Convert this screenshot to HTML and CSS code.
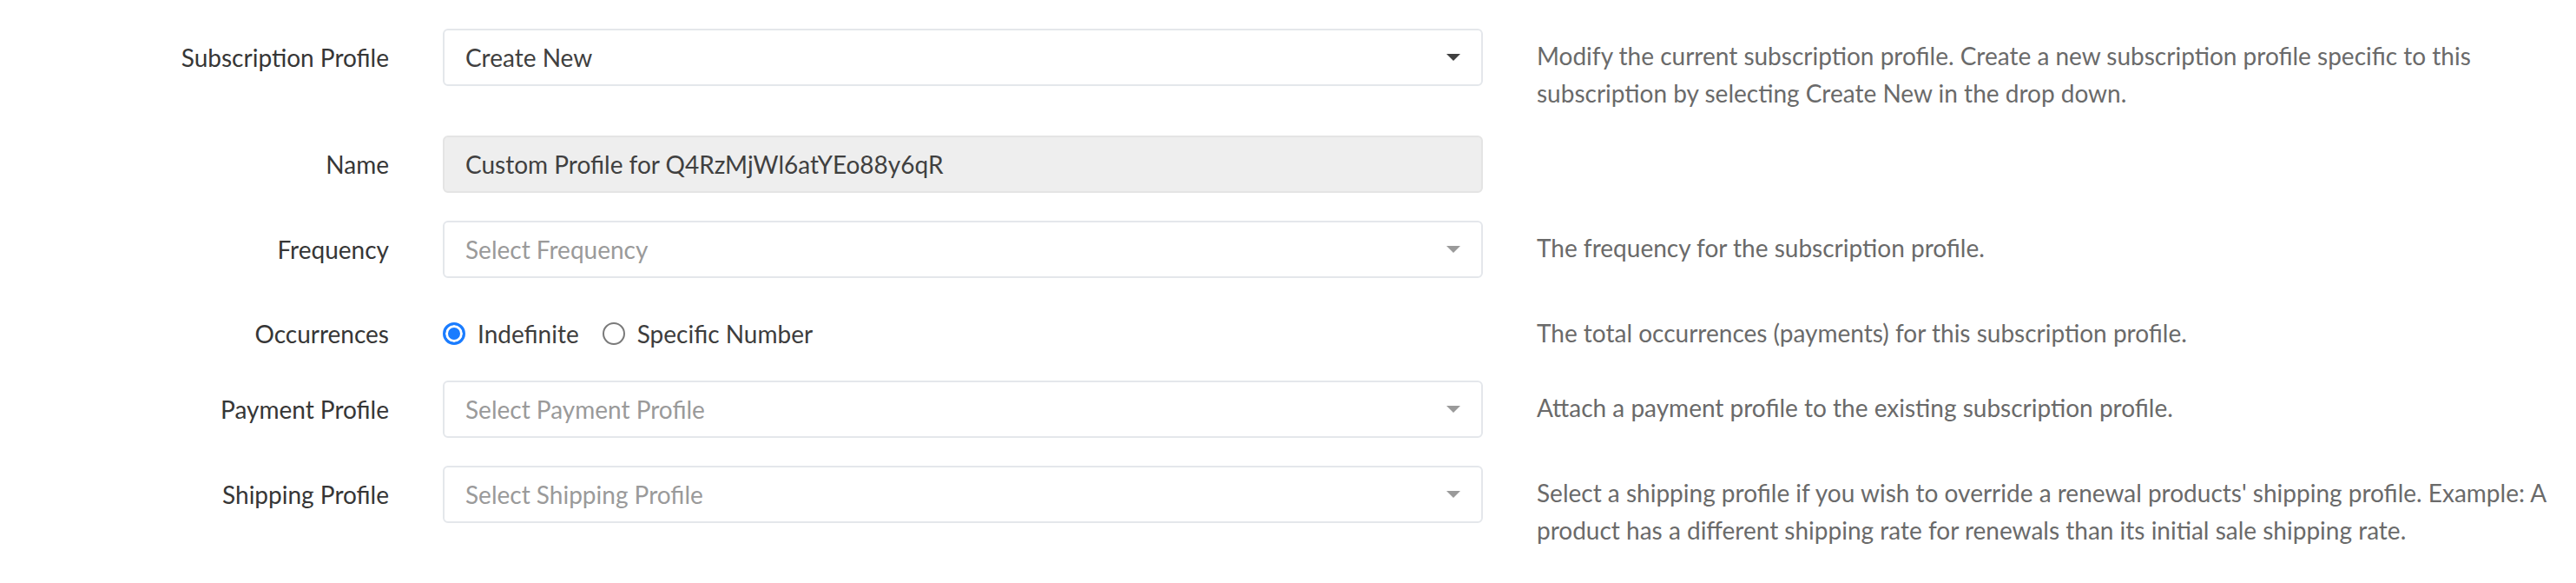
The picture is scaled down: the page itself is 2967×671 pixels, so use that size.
FILE: index.html
```html
<!DOCTYPE html>
<html lang="en">
<head>
<meta charset="utf-8">
<title>Subscription Profile</title>
<link rel="stylesheet" href="styles.css">
</head>
<body>
<form class="form">
  <div class="row">
    <label class="label">Subscription Profile</label>
    <div class="control">
      <div class="select"><span class="value">Create New</span><span class="caret"></span></div>
    </div>
    <p class="help">Modify the current subscription profile. Create a new subscription profile specific to this subscription by selecting Create New in the drop down.</p>
  </div>
  <div class="row">
    <label class="label">Name</label>
    <div class="control">
      <div class="input disabled">Custom Profile for Q4RzMjWl6atYEo88y6qR</div>
    </div>
    <p class="help"></p>
  </div>
  <div class="row">
    <label class="label">Frequency</label>
    <div class="control">
      <div class="select"><span class="placeholder">Select Frequency</span><span class="caret light"></span></div>
    </div>
    <p class="help">The frequency for the subscription profile.</p>
  </div>
  <div class="row row-radio">
    <label class="label">Occurrences</label>
    <div class="control radios">
      <span class="radio-item"><span class="radio checked"></span><span>Indefinite</span></span>
      <span class="radio-item"><span class="radio"></span><span>Specific Number</span></span>
    </div>
    <p class="help">The total occurrences (payments) for this subscription profile.</p>
  </div>
  <div class="row">
    <label class="label">Payment Profile</label>
    <div class="control">
      <div class="select"><span class="placeholder">Select Payment Profile</span><span class="caret light"></span></div>
    </div>
    <p class="help">Attach a payment profile to the existing subscription profile.</p>
  </div>
  <div class="row">
    <label class="label">Shipping Profile</label>
    <div class="control">
      <div class="select"><span class="placeholder">Select Shipping Profile</span><span class="caret light"></span></div>
    </div>
    <p class="help">Select a shipping profile if you wish to override a renewal products' shipping profile. Example: A product has a different shipping rate for renewals than its initial sale shipping rate.</p>
  </div>
</form>
</body>
</html>
```
FILE: styles.css
```css
html, body {
  margin: 0;
  padding: 0;
  background: #ffffff;
}

body {
  font-family: Lato, "Noto Sans", "Liberation Sans", sans-serif;
  font-size: 28px;
  color: #3d3d3d;
}

.form {
  padding-top: 33px;
  display: flex;
  flex-direction: column;
  gap: 32px;
}

.row {
  display: grid;
  grid-template-columns: 448px 1198px 1fr;
  column-gap: 62px;
  align-items: start;
}

.label {
  text-align: right;
  line-height: 66px;
  height: 66px;
  color: #363636;
}

.control {
  min-width: 0;
}

.select,
.input {
  box-sizing: border-box;
  height: 66px;
  border: 2px solid #e4e7eb;
  border-radius: 6px;
  padding: 0 24px;
  display: flex;
  align-items: center;
  justify-content: space-between;
  background: #ffffff;
  color: #404040;
}

.input.disabled {
  background: #eeeeee;
  border-color: #e4e4e4;
}

.placeholder {
  color: #9a9a9a;
}

.caret {
  width: 0;
  height: 0;
  border-left: 8px solid transparent;
  border-right: 8px solid transparent;
  border-top: 8px solid #404040;
}

.caret.light {
  border-top-color: #9a9a9a;
}

.help {
  margin: 0 0 -5px;
  padding-top: 10px;
  line-height: 43px;
  color: #6a6a6a;
}

.row-radio {
  padding-top: 10px;
}

.row-radio .label,
.row-radio .radios {
  height: 44px;
  line-height: 44px;
}

.row-radio .help {
  padding-top: 0;
}

.radios {
  display: flex;
  align-items: center;
  gap: 27px;
  color: #3d3d3d;
}

.radio-item {
  display: inline-flex;
  align-items: center;
  gap: 14px;
}

.radio {
  box-sizing: border-box;
  width: 26px;
  height: 26px;
  border-radius: 50%;
  border: 2px solid #7a7a7a;
  background: #ffffff;
  display: inline-block;
}

.radio.checked {
  border: 3px solid #1a7cff;
  background: #1a7cff;
  box-shadow: inset 0 0 0 3px #ffffff;
}
```
